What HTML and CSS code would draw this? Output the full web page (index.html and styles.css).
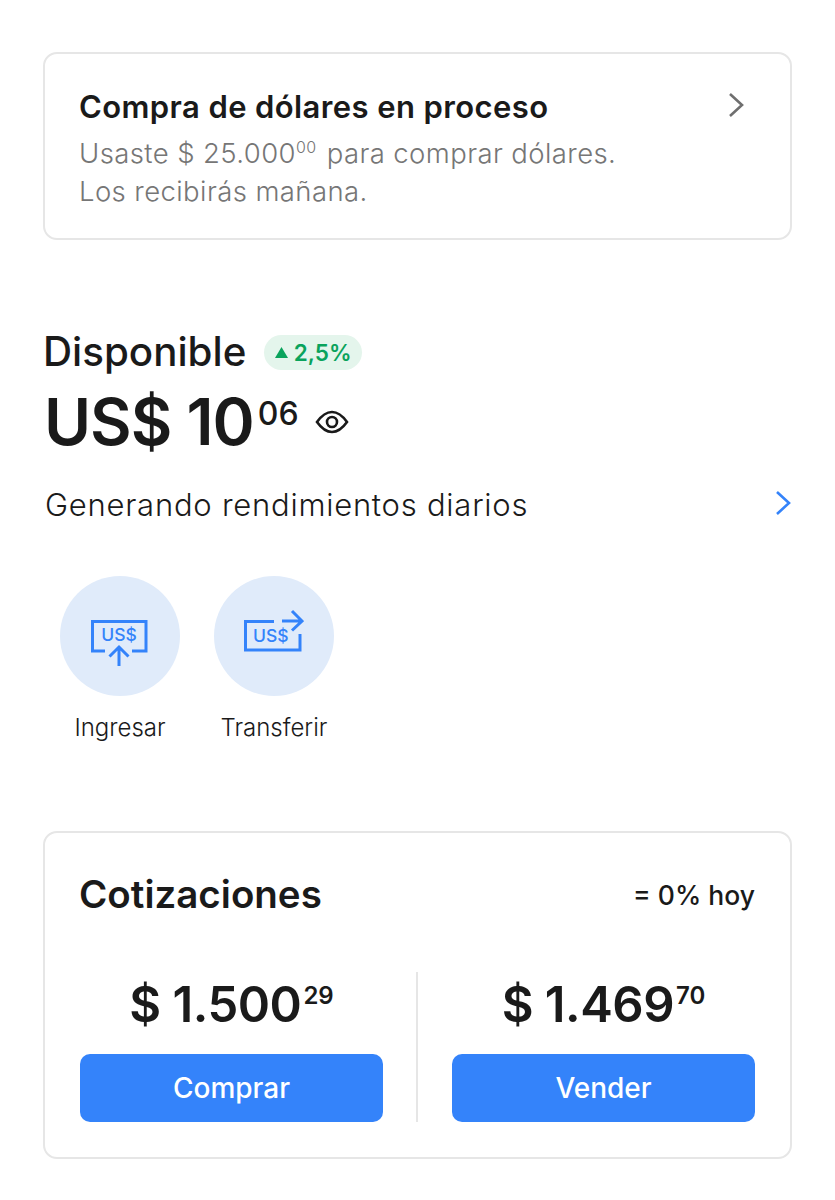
FILE: index.html
```html
<!DOCTYPE html>
<html lang="es">
<head>
  <meta charset="UTF-8" />
  <meta name="viewport" content="width=device-width, initial-scale=1.0"/>
  <title>Dólares</title>
  <link rel="stylesheet" href="styles.css">
</head>
<body>

  <section class="card notice">
    <div class="notice-text">
      <h2 class="notice-title">Compra de dólares en proceso</h2>
      <p class="notice-sub">Usaste $ 25.000<sup>00</sup> para comprar dólares.<br>Los recibirás mañana.</p>
    </div>
    <svg class="notice-chevron" width="18" height="26" viewBox="0 0 18 26"><path d="M3 2l12 11L3 24" fill="none" stroke="#6f6f6f" stroke-width="2.6"/></svg>
  </section>

  <section class="balance">
    <div class="balance-head">
      <h2 class="balance-title">Disponible</h2>
      <span class="badge"><svg width="13" height="11" viewBox="0 0 13 11"><path d="M6.5 0L13 11H0z" fill="#0aa35c"/></svg>2,5%</span>
    </div>
    <div class="amount-row">
      <span class="amount">US$ 10<sup>06</sup></span>
      <svg class="eye" width="34" height="24" viewBox="0 0 34 24">
        <path d="M2 12C7 5 12 2 17 2s10 3 15 10c-5 7-10 10-15 10S7 19 2 12z" fill="none" stroke="#1a1a1a" stroke-width="2.6"/>
        <circle cx="17" cy="12" r="5" fill="none" stroke="#1a1a1a" stroke-width="2.6"/>
      </svg>
    </div>
    <div class="yield-row">
      <span>Generando rendimientos diarios</span>
      <svg class="yield-chevron" width="18" height="26" viewBox="0 0 18 26"><path d="M3 2l12 11L3 24" fill="none" stroke="#3483fa" stroke-width="2.6"/></svg>
    </div>
    <div class="actions">
      <div class="action">
        <div class="action-circle">
          <svg width="60" height="60" viewBox="0 0 60 60">
            <path d="M15 45H2.5V15.5H56V45H42" fill="none" stroke="#3483fa" stroke-width="3"/>
            <text x="29" y="35" class="icon-text" text-anchor="middle">US$</text>
            <path d="M29 60V41M19.5 50.5L29 41l9.5 9.5" fill="none" stroke="#3483fa" stroke-width="3"/>
          </svg>
        </div>
        <span class="action-label">Ingresar</span>
      </div>
      <div class="action">
        <div class="action-circle">
          <svg width="60" height="60" viewBox="0 0 60 60">
            <path d="M30 15.5H1.5V44H56V28" fill="none" stroke="#3483fa" stroke-width="3"/>
            <text x="9" y="36" class="icon-text">US$</text>
            <path d="M38 15h20M48 5l10 10-10 9.5" fill="none" stroke="#3483fa" stroke-width="3"/>
          </svg>
        </div>
        <span class="action-label">Transferir</span>
      </div>
    </div>
  </section>

  <section class="card quotes">
    <div class="quotes-head">
      <h2 class="quotes-title">Cotizaciones</h2>
      <span class="quotes-change">= 0% hoy</span>
    </div>
    <div class="quotes-grid">
      <div class="quote">
        <span class="price">$ 1.500<sup>29</sup></span>
        <button class="btn">Comprar</button>
      </div>
      <div class="quote-divider"></div>
      <div class="quote quote-sell">
        <span class="price">$ 1.469<sup>70</sup></span>
        <button class="btn">Vender</button>
      </div>
    </div>
  </section>

</body>
</html>
```

FILE: styles.css
```css
body {
  margin: 0;
  padding: 52px 43px 0 43px;
  background-color: #fff;
  color: #1a1a1a;
  font-family: Inter, "Liberation Sans", sans-serif;
}

h2, p {
  margin: 0;
}

.card {
  border: 2px solid #e6e6e6;
  border-radius: 14px;
  box-sizing: border-box;
}

.notice {
  height: 188px;
  padding: 32px 45px 0 34px;
  display: flex;
  justify-content: space-between;
  align-items: flex-start;
}

.notice-title {
  font-size: 31px;
  line-height: 42px;
  font-weight: 600;
  letter-spacing: 0.4px;
}

.notice-sub {
  font-size: 27.5px;
  line-height: 38px;
  color: #767676;
  margin-top: 6px;
  font-weight: 300;
  letter-spacing: 0.4px;
}

.notice-sub sup {
  font-size: 16px;
  line-height: 0;
  vertical-align: 10px;
  margin-right: 2px;
}

.notice-chevron {
  margin-top: 6px;
}

.balance {
  margin-top: 89px;
}

.balance-head {
  display: flex;
  align-items: center;
  gap: 18px;
}

.balance-title {
  font-size: 40.3px;
  line-height: 46px;
  font-weight: 500;
}

.badge {
  display: flex;
  align-items: center;
  gap: 6px;
  height: 35px;
  padding: 0 10.5px;
  border-radius: 18px;
  background-color: #e4f5ec;
  color: #0aa35c;
  font-size: 22.5px;
  font-weight: 600;
}

.amount-row {
  display: flex;
  align-items: center;
  gap: 16px;
  height: 72px;
  margin-top: 11px;
  padding-left: 1px;
}

.amount {
  font-size: 64px;
  line-height: 72px;
  font-weight: 600;
  letter-spacing: -1px;
}

.amount sup {
  font-size: 32px;
  font-weight: 500;
  line-height: 0;
  vertical-align: 20px;
  margin-left: 4px;
  letter-spacing: 0;
}

.yield-row {
  display: flex;
  justify-content: space-between;
  align-items: center;
  margin-top: 27px;
  font-size: 31px;
  font-weight: 300;
  letter-spacing: 0.75px;
  line-height: 40px;
  padding-left: 2px;
}

.yield-chevron {
  margin-bottom: 5px;
}

.actions {
  display: flex;
  gap: 34px;
  margin-top: 51px;
  padding-left: 17px;
}

.action {
  width: 120px;
  display: flex;
  flex-direction: column;
  align-items: center;
}

.action-circle {
  width: 120px;
  height: 120px;
  border-radius: 50%;
  background-color: #e0ebfa;
  display: flex;
  align-items: center;
  justify-content: center;
}

.icon-text {
  font-family: Inter, sans-serif;
  font-size: 17.5px;
  font-weight: 500;
  fill: #3483fa;
}

.action-label {
  margin-top: 17px;
  font-size: 24px;
  font-weight: 300;
  line-height: 30px;
  white-space: nowrap;
}

.quotes {
  margin-top: 88px;
  height: 328px;
  padding: 36px 35px 0 35px;
}

.quotes-head {
  display: flex;
  justify-content: space-between;
  align-items: center;
}

.quotes-title {
  font-size: 38.5px;
  line-height: 50px;
  font-weight: 600;
  margin-left: -1px;
}

.quotes-change {
  font-size: 26.5px;
  font-weight: 500;
  margin-top: 2px;
}

.quotes-grid {
  display: grid;
  grid-template-columns: 303px 2px 1fr;
  column-gap: 33px;
  margin-top: 53px;
}

.quote {
  display: flex;
  flex-direction: column;
  align-items: center;
}

.quote-sell {
  padding-left: 1px;
}

.quote-divider {
  background-color: #e6e6e6;
}

.price {
  font-size: 49px;
  line-height: 66px;
  font-weight: 600;
  margin-bottom: 16px;
  letter-spacing: -0.5px;
}

.price sup {
  font-size: 24px;
  font-weight: 600;
  line-height: 0;
  vertical-align: 18px;
  margin-left: 2px;
  letter-spacing: 0;
}

.btn {
  width: 100%;
  height: 68px;
  border: none;
  border-radius: 10px;
  background-color: #3483fa;
  color: #fff;
  font-family: inherit;
  font-size: 28px;
  font-weight: 500;
  cursor: pointer;
}
```
